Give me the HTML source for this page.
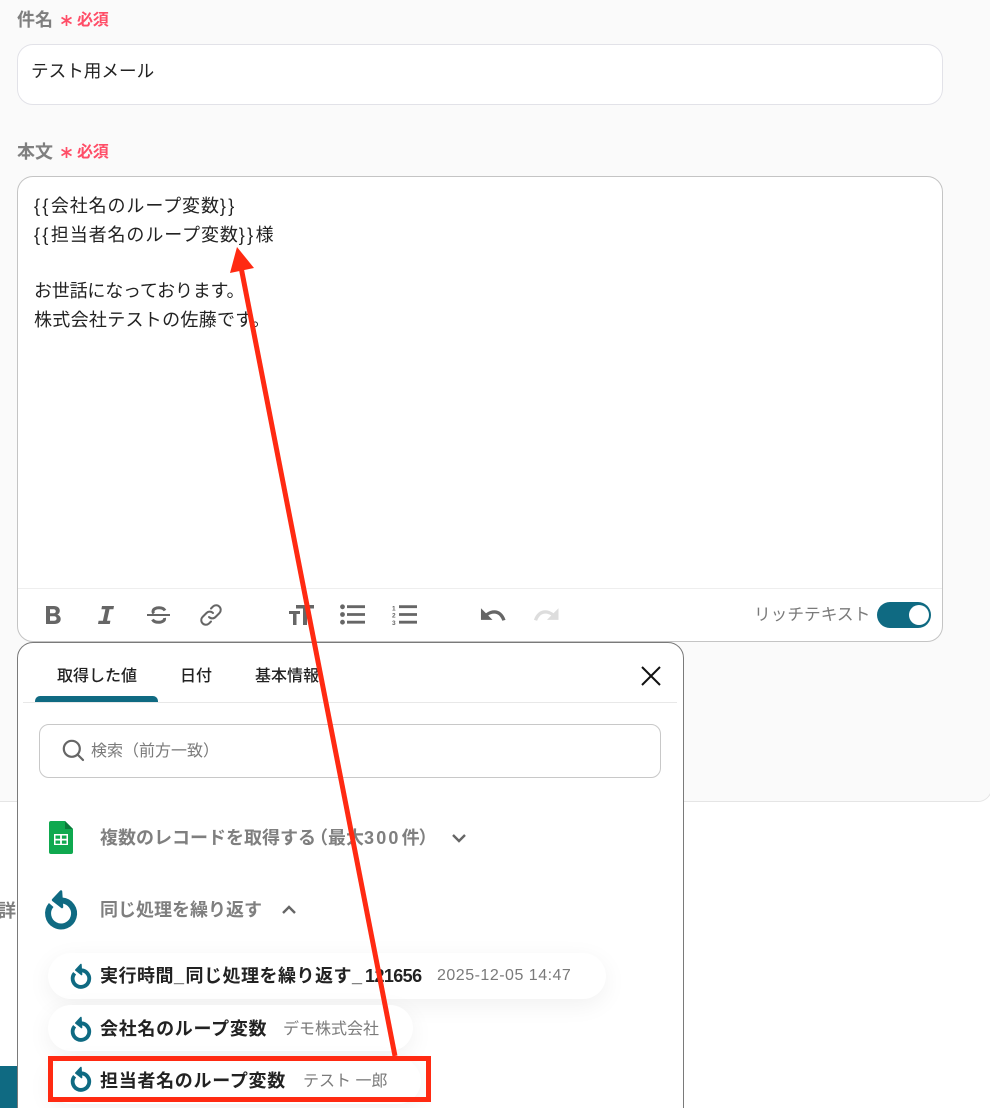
<!DOCTYPE html>
<html lang="ja"><head><meta charset="utf-8"><style>
html,body{margin:0;padding:0;width:990px;height:1108px;overflow:hidden}
body{position:relative;background:#fff;font-family:"Liberation Sans","Noto Sans CJK JP",sans-serif;color:#222}
#w{position:absolute;left:0;top:0;width:990px;height:1108px;overflow:hidden}
.a{position:absolute;white-space:nowrap}
.lbl{font-size:18px;font-weight:700;color:#7f7f7f;line-height:24px}
.req{font-size:16px;font-weight:700;color:#ff4d67;line-height:20px;letter-spacing:-.3px}
.pill{position:absolute;background:#fff;border-radius:23px;box-shadow:0 6px 24px rgba(0,0,0,.06);height:46px}
.b{font-size:18px;font-weight:700;color:#222;line-height:24px;letter-spacing:.7px}
.g{font-size:16px;color:#7a7a7a;line-height:24px}
.tab{font-size:16px;font-weight:500;color:#222;line-height:22px}
.br{letter-spacing:2.400px}
.v{letter-spacing:.9px}
svg{position:absolute;overflow:visible}
</style></head><body><div id="w">
<svg width="0" height="0" style="left:0;top:0"><defs><g id="loop"><path d="M18 11.500A13 13 0 1 1 7.200 16" stroke="#0f6a82" stroke-width="6" fill="none"/><path d="M17 2.500L9 11l9 7z" fill="#0f6a82" stroke="#0f6a82" stroke-width="2.500" stroke-linejoin="round"/></g></defs></svg>
<div class="a" style="left:-1px;top:-1px;width:991px;height:801px;background:#fafafa;border:1px solid #e5e5e5;border-radius:0 0 14px 0"></div>
<div class="a" style="left:0;top:1066px;width:17px;height:42px;background:#0f6a82"></div>
<div class="a" style="left:-2px;top:899px;font-size:18px;font-weight:700;color:#7f7f7f;line-height:24px;width:18px;overflow:hidden">詳</div>

<div class="a lbl" style="left:17px;top:8px">件名</div>
<svg style="left:60px;top:14px" width="13" height="13" viewBox="0 0 13 13"><path d="M6.500 1v11M1.500 3.500l10 6M11.500 3.500l-10 6" stroke="#ff4d67" stroke-width="1.700" fill="none"/></svg>
<div class="a req" style="left:77px;top:11px">必須</div>
<div class="a" style="left:17px;top:44px;width:924px;height:59px;background:#fff;border:1px solid #e2e2e8;border-radius:16px"></div>
<div class="a" style="left:31px;top:59px;font-size:17.600px;line-height:24px;color:#222">テスト用メール</div>

<div class="a lbl" style="left:17px;top:140px">本文</div>
<svg style="left:60px;top:146px" width="13" height="13" viewBox="0 0 13 13"><path d="M6.500 1v11M1.500 3.500l10 6M11.500 3.500l-10 6" stroke="#ff4d67" stroke-width="1.700" fill="none"/></svg>
<div class="a req" style="left:77px;top:143px">必須</div>

<div class="a" style="left:17px;top:176px;width:924px;height:464px;background:#fff;border:1px solid #c4c4c4;border-radius:16px"></div>
<div class="a" style="left:34px;top:192px;font-size:18px;line-height:29px;color:#222"><span class="br">{{</span><span class="v">会社名のループ変数</span><span class="br">}}</span><br><span class="br">{{</span><span class="v">担当者名のループ変数</span><span class="br">}}</span>様</div>
<div class="a" style="left:34px;top:277px;font-size:18px;line-height:29px;color:#222"><span style="letter-spacing:-.2px">お世話になっております。</span><br><span style="letter-spacing:.3px">株式会社テストの佐藤です。</span></div>
<div class="a" style="left:18px;top:588px;width:924px;height:1px;background:#eee"></div>

<svg style="left:46px;top:606px" width="15" height="18" viewBox="0 0 15 18" fill="#666"><path fill-rule="evenodd" d="M0 0h8c3.500 0 5.800 1.800 5.800 4.700 0 1.800-1 3.200-2.500 3.900 2 .6 3.400 2.200 3.400 4.400 0 3.100-2.500 5-6.200 5H0zM4 3.200v4.100h3.500c1.500 0 2.300-.8 2.300-2s-.8-2.100-2.300-2.100zM4 10.300v4.500h4c1.600 0 2.600-.9 2.600-2.300s-1-2.200-2.600-2.200z"/></svg>
<svg style="left:98px;top:606px" width="16" height="18" viewBox="0 0 16 18" fill="#666"><path d="M4 0h12l-.6 3.200h-3.900L9 14.800h3.400L11.800 18H0l.6-3.200h4.300L7.400 3.200H3.400z"/></svg>
<svg style="left:147px;top:604px" width="23" height="22" viewBox="0 0 23 22" fill="none" stroke="#666"><path d="M0 11h23" stroke-width="2"/><path d="M18 6.500C17 4.800 15 3.800 12 3.800c-3 0-6 1.200-6 3.700 0 .8.300 1.500.8 2M17.500 14c.5 2.400-2 4.300-6 4.300-3 0-5-1-6-2.800" stroke-width="3"/></svg>
<svg style="left:199px;top:603px" width="24" height="24" viewBox="0 0 24 24" fill="none" stroke="#666" stroke-width="2" stroke-linecap="round"><path d="M10 14a4.500 4.500 0 0 0 6.500 0l4-4a4.600 4.600 0 0 0-6.500-6.500l-2 2"/><path d="M14 10a4.500 4.500 0 0 0-6.500 0l-4 4a4.600 4.600 0 0 0 6.500 6.500l2-2"/></svg>
<svg style="left:289px;top:605px" width="25" height="20" viewBox="0 0 25 20" fill="#666"><path d="M7 0h18v3.500h-7V20h-4V3.500H7zM0 6h11v3H7.500v11h-3.500V9H0z"/></svg>
<svg style="left:339px;top:604px" width="26" height="22" viewBox="0 0 26 22" fill="#666"><circle cx="3.500" cy="2.800" r="2.400"/><circle cx="3.500" cy="10.500" r="2.400"/><circle cx="3.500" cy="18.200" r="2.400"/><path d="M8 1.300h18v2.800H8zM8 9.100h18v2.800H8zM8 16.800h18v2.800H8z"/></svg>
<svg style="left:392px;top:604px" width="26" height="22" viewBox="0 0 26 22" fill="#666"><path d="M7 1.300h18v2.800H7zM7 9.100h18v2.800H7zM7 16.800h18v2.800H7z"/><text x="0" y="6.500" font-size="6.500" font-weight="700" font-family="Liberation Sans">1</text><text x="0" y="13.500" font-size="6.500" font-weight="700" font-family="Liberation Sans">2</text><text x="0" y="21" font-size="6.500" font-weight="700" font-family="Liberation Sans">3</text></svg>
<svg style="left:480px;top:608px" width="26" height="15" viewBox="0 0 27 15"><path d="M1 0v12h12L8.500 7.500C11 5.800 13 5.500 15 5.500c3.500 0 6.500 2.500 8.200 7.500l3.300-1C24.500 5.500 20 2 15 2c-3 0-6 1-8.800 3.200z" fill="#666"/></svg>
<svg style="left:533px;top:608px" width="26" height="15" viewBox="0 0 27 15"><g transform="matrix(-1 0 0 1 27.500 0)"><path d="M1 0v12h12L8.500 7.500C11 5.800 13 5.500 15 5.500c3.500 0 6.500 2.500 8.200 7.500l3.300-1C24.500 5.500 20 2 15 2c-3 0-6 1-8.800 3.200z" fill="#ddd"/></g></svg>
<div class="a" style="left:754px;top:603px;font-size:16.700px;line-height:24px;color:#7a7a7a">リッチテキスト</div>
<div class="a" style="left:877px;top:602px;width:54px;height:26px;background:#0f6a82;border-radius:13px"></div>
<div class="a" style="left:909px;top:605px;width:20px;height:20px;background:#fff;border-radius:50%"></div>

<div class="a" style="left:17px;top:642px;width:665px;height:480px;background:#fff;border:1px solid #7a7a7a;border-radius:16px 16px 0 0"></div>
<div class="a tab" style="left:57px;top:666px">取得した値</div>
<div class="a tab" style="left:180px;top:666px">日付</div>
<div class="a tab" style="left:255px;top:666px">基本情報</div>
<div class="a" style="left:35px;top:696px;width:123px;height:6px;background:#0f6a82;border-radius:5px 5px 0 0"></div>
<div class="a" style="left:23px;top:702px;width:654px;height:1px;background:#e8e8e8"></div>
<svg style="left:641px;top:666px" width="20" height="20" viewBox="0 0 20 20"><path d="M1 1l18 18M19 1L1 19" stroke="#111" stroke-width="2" fill="none"/></svg>

<div class="a" style="left:39px;top:724px;width:620px;height:52px;border:1px solid #c8c8c8;border-radius:10px"></div>
<svg style="left:62px;top:739px" width="24" height="24" viewBox="0 0 24 24" fill="none" stroke="#666" stroke-width="2.200"><circle cx="9.800" cy="9.800" r="8"/><path d="M15.500 15.500l5.500 5.500" stroke-linecap="round"/></svg>
<div class="a" style="left:91px;top:741px;font-size:16px;line-height:22px;color:#7a7a7a">検索（前方一致）</div>

<svg style="left:49px;top:821px" width="24" height="33" viewBox="0 0 24 33"><path d="M2 0h14l8 8v23a2 2 0 0 1-2 2H2a2 2 0 0 1-2-2V2a2 2 0 0 1 2-2z" fill="#0fa94f"/><path d="M16 0l8 8h-8z" fill="#0a7a3a"/><path d="M5 13h14v11H5z" fill="#fff"/><path d="M6.500 14.500h4.600v3.200H6.500zM12.900 14.500h4.600v3.200h-4.600zM6.500 19.500h4.600v3.200H6.500zM12.900 19.500h4.600v3.200h-4.600z" fill="#0fa94f"/></svg>
<div class="a lbl" style="left:100px;top:826px">複数のレコードを取得する<span style="margin-left:-6px">（</span>最大<span style="letter-spacing:2.200px">300</span><span style="margin-left:1px">件</span><span style="margin-left:-1px">）</span></div>
<svg style="left:451px;top:833px" width="16" height="11" viewBox="0 0 16 11"><path d="M2 2l6 6 6-6" stroke="#666" stroke-width="2.400" fill="none"/></svg>

<svg style="left:44px;top:889px" width="34" height="41" viewBox="0 0 34 41"><use href="#loop"/></svg>
<div class="a lbl" style="left:100px;top:898px">同じ処理を繰り返す</div>
<svg style="left:281px;top:904px" width="16" height="11" viewBox="0 0 16 11"><path d="M2 9l6-6 6 6" stroke="#666" stroke-width="2.400" fill="none"/></svg>

<div class="pill" style="left:48px;top:953px;width:558px"></div>
<svg style="left:69.600px;top:962.500px" width="21.800" height="26.200" viewBox="0 0 34 41"><use href="#loop"/></svg>
<div class="a b" style="left:100px;top:964px;letter-spacing:.5px">実行時間<span style="letter-spacing:1.500px">_</span>同じ処理を繰り返す<span style="letter-spacing:3px">_</span><span style="letter-spacing:-.6px">121656</span></div>
<div class="a g" style="left:437px;top:964px;letter-spacing:.5px">2025-12-05 14:47</div>

<div class="pill" style="left:48px;top:1005px;width:365px"></div>
<svg style="left:69.600px;top:1015.500px" width="21.800" height="26.200" viewBox="0 0 34 41"><use href="#loop"/></svg>
<div class="a b" style="left:100px;top:1017px">会社名のループ変数</div>
<div class="a g" style="left:283px;top:1018px">デモ株式会社</div>

<div class="pill" style="left:48px;top:1058px;width:373px"></div>
<svg style="left:69.600px;top:1065.500px" width="21.800" height="26.200" viewBox="0 0 34 41"><use href="#loop"/></svg>
<div class="a b" style="left:100px;top:1069px">担当者名のループ変数</div>
<div class="a g" style="left:303px;top:1070px">テスト 一郎</div>

<div class="a" style="left:48px;top:1056px;width:373px;height:36px;border:5px solid #ff2a12"></div>
<svg style="left:0;top:0" width="990" height="1108" viewBox="0 0 990 1108"><path d="M395 1056L240 262" stroke="#ff2a12" stroke-width="5" fill="none"/><path d="M237 247L230 273 254 268z" fill="#ff2a12"/></svg>
</div></body></html>
